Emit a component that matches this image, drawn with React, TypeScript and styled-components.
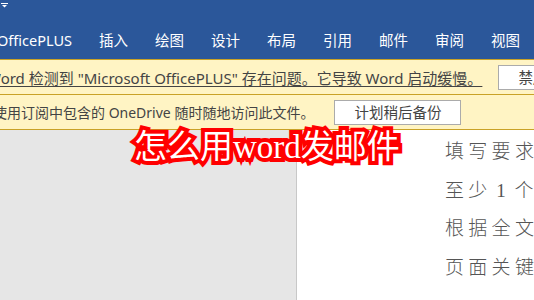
import styled, { createGlobalStyle } from 'styled-components';

const GlobalStyle = createGlobalStyle`
  html, body {
    margin: 0;
    padding: 0;
    background: #e6e6e6;
    overflow: hidden;
  }

  #root {
    width: 534px;
    height: 300px;
  }
`;

const tabs = ['OfficePLUS', '插入', '绘图', '设计', '布局', '引用', '邮件', '审阅', '视图'];

const pageLines = ['填写要求', '至少 1 个', '根据全文', '页面关键'];

const App = () => {
  return (
    <>
      <GlobalStyle />
      <Window>
        <Ribbon>
          <QuickBar>
            <svg width="7" height="5" viewBox="0 0 7 5">
              <rect x="0" y="0" width="7" height="1" fill="#fff" />
              <path d="M1 2 H6 L3.5 4.6 Z" fill="#fff" />
            </svg>
          </QuickBar>
          <TabRow>
            {tabs.map((t) => (
              <Tab key={t}>{t}</Tab>
            ))}
          </TabRow>
        </Ribbon>

        <MessageBar>
          <BarText $underline $offset={-13} $size={15}>
            Word 检测到 "Microsoft OfficePLUS" 存在问题。它导致 Word 启动缓慢。
          </BarText>
          <ActionButton $gap={16}>禁用此加载项</ActionButton>
        </MessageBar>

        <MessageBar>
          <BarText $offset={-7} $size={14}>
            使用订阅中包含的 OneDrive 随时随地访问此文件。
          </BarText>
          <ActionButton $gap={20}>计划稍后备份</ActionButton>
        </MessageBar>

        <Workspace>
          <Backdrop />
          <Page>
            {pageLines.map((line) => (
              <PageLine key={line}>{line}</PageLine>
            ))}
          </Page>
          <Headline>怎么用word发邮件</Headline>
        </Workspace>
      </Window>
    </>
  );
};

export default App;

const Window = styled.div`
  width: 534px;
  height: 300px;
  display: flex;
  flex-direction: column;
  overflow: hidden;
  font-family: 'Noto Sans', 'Noto Sans CJK SC', sans-serif;
`;

const Ribbon = styled.div`
  background: #2b579a;
  height: 59px;
  display: flex;
  flex-direction: column;
  flex-shrink: 0;
`;

const QuickBar = styled.div`
  height: 28px;
  padding: 2px 0 0 1px;
  box-sizing: border-box;
  line-height: 0;
`;

const TabRow = styled.div`
  display: flex;
  align-items: center;
  gap: 27px;
  height: 24px;
  margin-left: -3px;
  white-space: nowrap;
`;

const Tab = styled.div`
  color: #fff;
  font-size: 14.5px;
  line-height: 24px;
`;

const MessageBar = styled.div`
  height: 35px;
  box-sizing: border-box;
  background: #fff4c4;
  border-top: 1px solid #c9a227;
  display: flex;
  align-items: center;
  white-space: nowrap;
  overflow: hidden;
  flex-shrink: 0;
`;

const BarText = styled.span<{ $underline?: boolean; $offset: number; $size: number }>`
  margin-left: ${(p) => p.$offset}px;
  color: #444;
  font-size: ${(p) => p.$size}px;
  text-decoration: ${(p) => (p.$underline ? 'underline' : 'none')};
  text-underline-offset: 2px;
  flex-shrink: 0;
`;

const ActionButton = styled.div<{ $gap: number }>`
  margin-left: ${(p) => p.$gap}px;
  flex-shrink: 0;
  height: 25px;
  box-sizing: border-box;
  padding: 0 19px;
  background: #fff;
  border: 1px solid #ababab;
  color: #444;
  font-size: 14.5px;
  line-height: 23px;
`;

const Workspace = styled.div`
  flex: 1;
  display: flex;
  position: relative;
  border-top: 1px solid #c9a227;
`;

const Backdrop = styled.div`
  width: 296px;
  flex-shrink: 0;
  background: #e6e6e6;
  border-right: 1px solid #c8c8c8;
`;

const Page = styled.div`
  flex: 1;
  min-width: 0;
  overflow: hidden;
  background: #fff;
  padding: 3px 0 0 148px;
`;

const PageLine = styled.div`
  font-family: 'Liberation Serif', 'Noto Sans CJK SC', serif;
  font-size: 19px;
  font-weight: 300;
  letter-spacing: 4.3px;
  word-spacing: -4.5px;
  color: #555;
  line-height: 38.5px;
  white-space: nowrap;
`;

const Headline = styled.div`
  position: absolute;
  left: 134px;
  top: -10px;
  font-family: 'Liberation Serif', 'Noto Sans CJK SC', serif;
  font-size: 33px;
  font-weight: 400;
  color: #fff;
  -webkit-text-stroke: 8px #ff0000;
  paint-order: stroke fill;
  text-shadow: 0 0 2px #ff0000, 0 0 2px #ff0000;
  white-space: nowrap;
`;
